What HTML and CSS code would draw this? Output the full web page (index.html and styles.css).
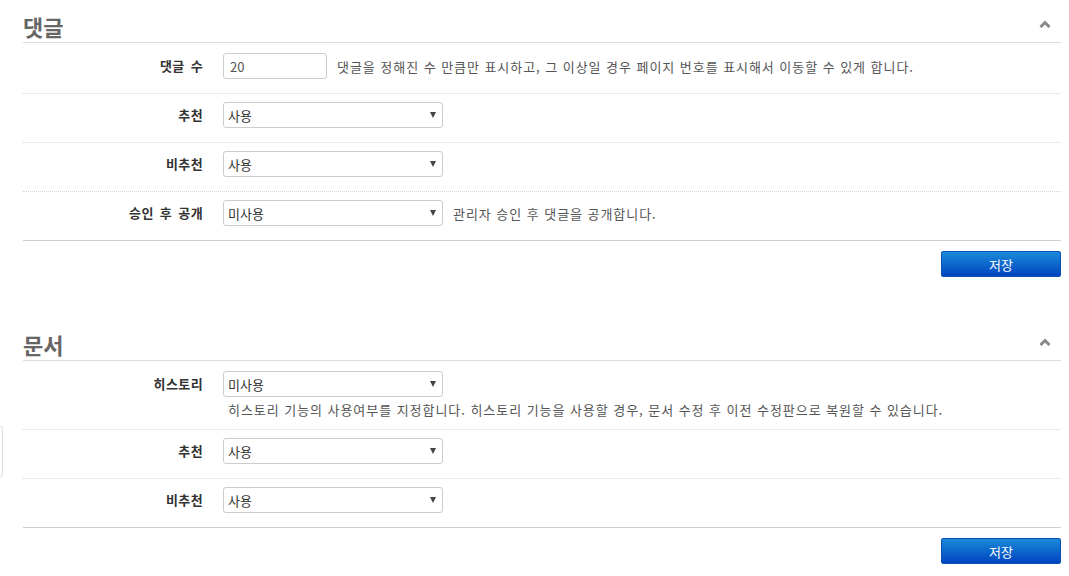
FILE: index.html
```html
<!DOCTYPE html>
<html lang="ko">
<head>
<meta charset="utf-8">
<link rel="stylesheet" href="styles.css">
</head>
<body>
<div class="edge-tab"></div>
<div class="page">
  <section class="sect">
    <div class="sect-head">
      <h2 class="sect-title">댓글</h2>
      <svg class="chev" width="12" height="8" viewBox="0 0 12 8"><polyline points="1.5,7 6,2.5 10.5,7" fill="none" stroke="#8a8a8a" stroke-width="3"/></svg>
    </div>
    <div class="row first">
      <div class="lbl">댓글 수</div>
      <div class="field">
        <div class="line">
          <input class="txt" type="text" value="20">
          <span class="desc">댓글을 정해진 수 만큼만 표시하고, 그 이상일 경우 페이지 번호를 표시해서 이동할 수 있게 합니다.</span>
        </div>
      </div>
    </div>
    <div class="row">
      <div class="lbl">추천</div>
      <div class="field"><div class="line"><span class="sel"><select><option>사용</option></select></span></div></div>
    </div>
    <div class="row">
      <div class="lbl">비추천</div>
      <div class="field"><div class="line"><span class="sel"><select><option>사용</option></select></span></div></div>
    </div>
    <div class="row last">
      <div class="lbl">승인 후 공개</div>
      <div class="field"><div class="line"><span class="sel"><select><option>미사용</option></select></span><span class="desc">관리자 승인 후 댓글을 공개합니다.</span></div></div>
    </div>
    <div class="actions"><button class="btn" type="button">저장</button></div>
  </section>

  <section class="sect second">
    <div class="sect-head">
      <h2 class="sect-title">문서</h2>
      <svg class="chev" width="12" height="8" viewBox="0 0 12 8"><polyline points="1.5,7 6,2.5 10.5,7" fill="none" stroke="#8a8a8a" stroke-width="3"/></svg>
    </div>
    <div class="row first has-help">
      <div class="lbl">히스토리</div>
      <div class="field">
        <div class="line"><span class="sel"><select><option>미사용</option></select></span></div>
        <p class="help">히스토리 기능의 사용여부를 지정합니다. 히스토리 기능을 사용할 경우, 문서 수정 후 이전 수정판으로 복원할 수 있습니다.</p>
      </div>
    </div>
    <div class="row">
      <div class="lbl">추천</div>
      <div class="field"><div class="line"><span class="sel"><select><option>사용</option></select></span></div></div>
    </div>
    <div class="row last">
      <div class="lbl">비추천</div>
      <div class="field"><div class="line"><span class="sel"><select><option>사용</option></select></span></div></div>
    </div>
    <div class="actions"><button class="btn" type="button">저장</button></div>
  </section>
</div>
</body>
</html>
```

FILE: styles.css
```css
* { box-sizing: border-box; }
html, body { margin: 0; padding: 0; background: #fff; }
body {
  font-family: "Noto Sans CJK KR", "Noto Sans", sans-serif;
  font-size: 12px;
  color: #333;
  position: relative;
}
.page {
  width: 1061px;
  padding-left: 23px;
}
.edge-tab {
  position: absolute;
  left: -10px;
  top: 425px;
  width: 13px;
  height: 53px;
  border: 1px solid #ddd;
  border-radius: 4px;
  background: #fff;
}
.sect.second { margin-top: 41px; }
.sect-head {
  display: flex;
  justify-content: space-between;
  align-items: center;
  height: 43px;
  padding-top: 10px;
  border-bottom: 1px solid #dcdcdc;
}
.sect-title {
  margin: 0;
  font-size: 22px;
  line-height: 32px;
  font-weight: bold;
  color: #666;
}
.chev {
  margin-right: 10px;
  margin-top: -4px;
}
.row {
  display: flex;
  padding: 8px 0 14px;
  border-bottom: 1px dotted #d6d6d6;
}
.row.first { padding-top: 10px; }
.row.has-help { padding-bottom: 11px; }
.row.last { border-bottom: 1px solid #cfcfcf; }
.lbl {
  width: 180px;
  flex: none;
  text-align: right;
  font-weight: bold;
  font-size: 13px;
  letter-spacing: 0.4px;
  word-spacing: 2px;
  line-height: 26px;
  color: #333;
}
.field {
  margin-left: 20px;
  flex: 1;
}
.line {
  display: flex;
  align-items: center;
  height: 26px;
}
.txt {
  width: 104px;
  height: 26px;
  border: 1px solid #ccc;
  border-radius: 3px;
  padding: 0 6px;
  font-family: "Noto Sans CJK KR", "Noto Sans", sans-serif;
  font-size: 13px;
  color: #555;
  outline: none;
}
.sel {
  position: relative;
  display: inline-block;
  width: 220px;
  height: 26px;
}
.sel select {
  -webkit-appearance: none;
  appearance: none;
  width: 100%;
  height: 26px;
  border: 1px solid #ccc;
  border-radius: 3px;
  padding: 0 4px;
  background: #fff;
  font-family: "Noto Sans CJK KR", "Noto Sans", sans-serif;
  font-size: 13px;
  color: #333;
  outline: none;
}
.sel::after {
  content: "";
  position: absolute;
  right: 7px;
  top: 10px;
  border-left: 3.5px solid transparent;
  border-right: 3.5px solid transparent;
  border-top: 6px solid #444;
  pointer-events: none;
}
.desc {
  margin-left: 10px;
  color: #555;
  font-size: 13px;
  letter-spacing: 0.95px;
  white-space: nowrap;
}
.help {
  margin: 5px 0 0;
  padding-left: 5px;
  line-height: 16px;
  color: #555;
  font-size: 13px;
  letter-spacing: 0.95px;
  white-space: nowrap;
}
.actions {
  display: flex;
  justify-content: flex-end;
  padding-top: 10px;
}
.btn {
  width: 120px;
  height: 26px;
  border: 1px solid #0a4fb5;
  border-radius: 2px;
  background: linear-gradient(#1a8ad9, #0044c0);
  color: #fff;
  font-family: "Noto Sans CJK KR", "Noto Sans", sans-serif;
  font-size: 13px;
  padding: 0;
  cursor: pointer;
}
```
